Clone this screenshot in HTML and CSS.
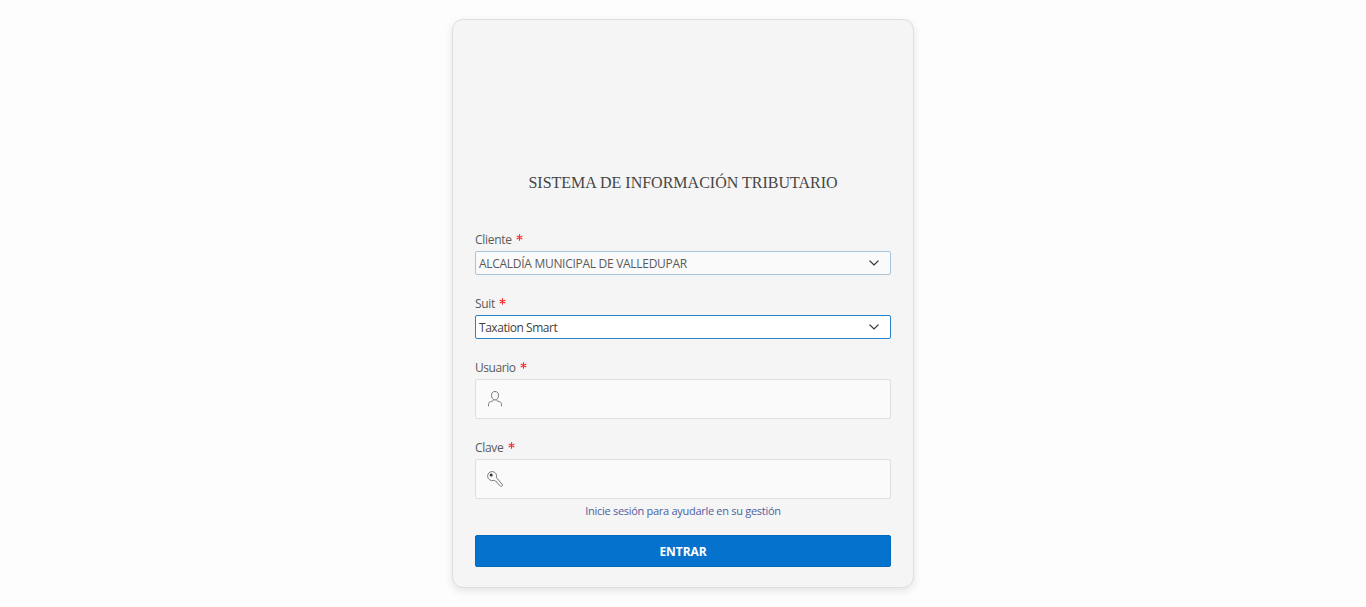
FILE: index.html
```html
<!DOCTYPE html>
<html lang="es">
<head>
<meta charset="utf-8">
<title>Sistema de Información Tributario</title>
<link rel="stylesheet" href="styles.css">
</head>
<body>
<main class="card">
  <h1 class="title">SISTEMA DE INFORMACIÓN TRIBUTARIO</h1>
  <div class="field">
    <div class="label"><span class="t-cliente">Cliente</span><svg class="req" viewBox="0 0 7 7"><path d="M3.5 .3v6.4M.7 1.9l5.6 3.2M6.3 1.9L.7 5.1"/></svg></div>
    <div class="select"><span class="t-client-value">ALCALDÍA MUNICIPAL DE VALLEDUPAR</span><svg class="chevron" viewBox="0 0 10 6"><path d="M.5.6L5 4.9 9.5.6"/></svg></div>
  </div>
  <div class="field">
    <div class="label"><span class="t-suit">Suit</span><svg class="req" viewBox="0 0 7 7"><path d="M3.5 .3v6.4M.7 1.9l5.6 3.2M6.3 1.9L.7 5.1"/></svg></div>
    <div class="select active"><span class="t-suit-value">Taxation Smart</span><svg class="chevron" viewBox="0 0 10 6"><path d="M.5.6L5 4.9 9.5.6"/></svg></div>
  </div>
  <div class="field">
    <div class="label"><span class="t-usuario">Usuario</span><svg class="req" viewBox="0 0 7 7"><path d="M3.5 .3v6.4M.7 1.9l5.6 3.2M6.3 1.9L.7 5.1"/></svg></div>
    <div class="input"><svg class="icon" viewBox="0 0 16 16"><path d="M8 .5C5.8.5 4.5 2 4.5 4.3c0 2.6 1.5 4.7 3.5 4.7s3.5-2.1 3.5-4.7C11.5 2 10.2.5 8 .5zM1.5 15.3v-2.1c0-1.4.8-2.1 2-2.5l2.2-.8c.7-.3.9-.8.9-1.3M14.5 15.3v-2.1c0-1.4-.8-2.1-2-2.5l-2.2-.8c-.7-.3-.9-.8-.9-1.3"/></svg></div>
  </div>
  <div class="field last">
    <div class="label"><span class="t-clave">Clave</span><svg class="req" viewBox="0 0 7 7"><path d="M3.5 .3v6.4M.7 1.9l5.6 3.2M6.3 1.9L.7 5.1"/></svg></div>
    <div class="input"><svg class="icon key" viewBox="0 0 16 16"><path d="M9.4 6.5A4.5 4.5 0 1 0 6.4 9.4l1.5.1.7 1 1 .1.3 1 3.6 3.5c.6.5 1.3.4 1.7 0 .5-.5.5-1.2 0-1.7z"/><circle cx="4.2" cy="4.1" r="1.5"/></svg></div>
  </div>
  <p class="hint"><span>Inicie sesión para ayudarle en su gestión</span></p>
  <button class="submit" type="button">ENTRAR</button>
</main>
</body>
</html>
```
FILE: styles.css
```css
* { box-sizing: border-box; }
body {
  margin: 0;
  height: 607px;
  overflow: hidden;
  padding-top: 19px;
  background: #fdfdfd;
  font: 12px/16px "Open Sans", "Noto Sans", sans-serif;
  color: #5a5a5a;
}
.card {
  width: 462px;
  height: 569px;
  margin: 0 auto;
  padding: 0 22px;
  background: #f5f5f5;
  border: 1px solid #dedede;
  border-radius: 11px;
  box-shadow: 0 3px 8px rgba(0, 0, 0, .1);
}
.title {
  margin: 0 0 35px;
  padding-top: 151px;
  font: 16px/23px "Liberation Serif", serif;
  text-align: center;
  color: #454545;
}
.field { margin-bottom: 18px; }
.last { margin-bottom: 0; }
.label {
  display: flex;
  align-items: center;
  gap: 4px;
  height: 22px;
}
.label span, .select span, .hint span { white-space: nowrap; }
.req {
  width: 7px;
  height: 7px;
  margin-bottom: 5px;
  fill: none;
  stroke: #ff2828;
  stroke-width: 1.1;
}
.select, .input {
  display: flex;
  align-items: center;
  background: #fafafa;
  border: 1px solid #a9c5dc;
  border-radius: 2px;
}
.select {
  justify-content: space-between;
  height: 24px;
  padding: 0 11px 0 3px;
}
.select span { padding-top: 2px; }
.active {
  background: #fff;
  border-color: #2583cf;
  color: #424242;
}
.chevron {
  width: 10px;
  height: 6px;
  fill: none;
  stroke: #333;
  stroke-width: 1.3;
}
.input {
  height: 40px;
  padding-left: 11px;
  border-color: #dfdfdf;
}
.icon {
  width: 16px;
  height: 16px;
  fill: none;
  stroke: #777;
  stroke-width: 1;
}
.key circle { fill: #333; stroke: none; }
.hint {
  height: 24px;
  margin: 0 0 12px;
  font-size: 11px;
  line-height: 24px;
  text-align: center;
  color: #5060a2;
}
.submit {
  display: block;
  width: 100%;
  height: 32px;
  padding: 2px 0 0;
  background: #0572ce;
  border: 1px solid #0467ba;
  border-radius: 2px;
  color: #fff;
  font: bold 12px/28px "Open Sans", "Noto Sans", sans-serif;
  letter-spacing: -.05px;
}
.t-cliente, .t-suit, .t-clave { letter-spacing: -.3px; }
.t-usuario { letter-spacing: -.45px; }
.t-client-value { letter-spacing: -.29px; }
.t-suit-value { letter-spacing: -.46px; }
.hint span { letter-spacing: -.29px; }
```
